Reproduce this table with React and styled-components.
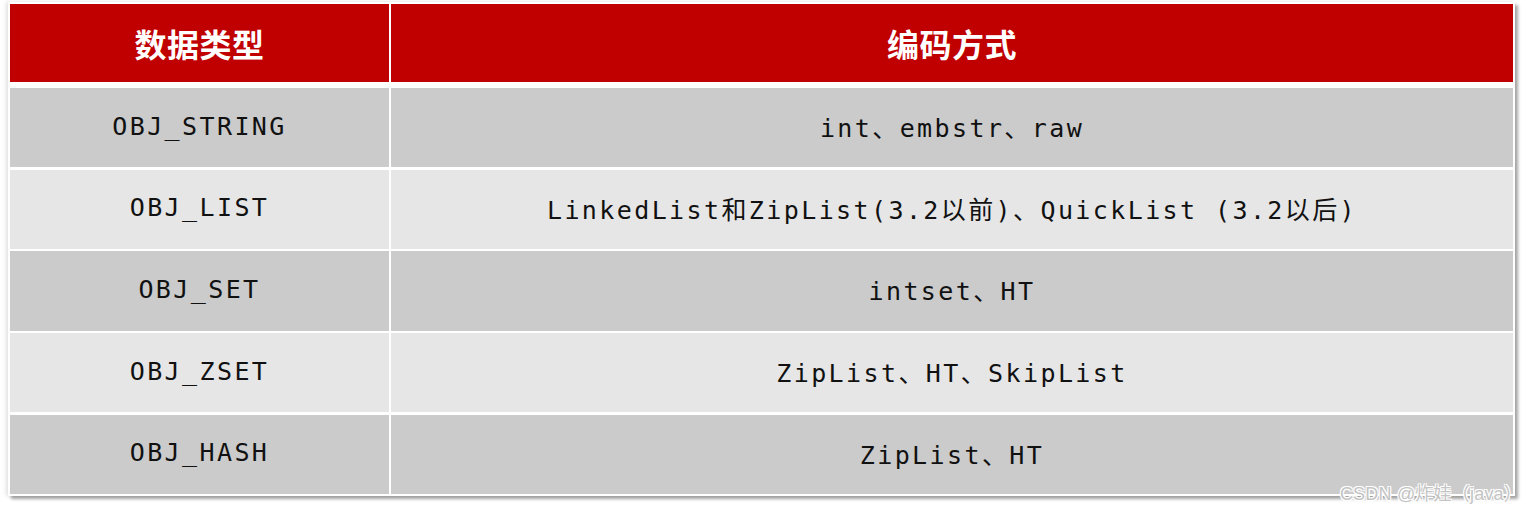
import styled, { createGlobalStyle } from 'styled-components'

const Global = createGlobalStyle`
	body{
		margin:0;
		background:#ffffff;
	}
`

const Page = styled.div`
	position:relative;
	width:1527px;
	height:512px;
	padding:2px 0 0 8px;
	box-sizing:border-box;
`

const Table = styled.div`
	width:1507px;
	padding:2px;
	box-sizing:border-box;
	background:#ffffff;
	display:grid;
	grid-template-columns:379px 1fr;
	grid-template-rows:81.5px repeat(5,79.2px);
	column-gap:2px;
	row-gap:2.5px;
	box-shadow:3px 3px 3px rgba(0,0,0,0.35), -2px 0 4px rgba(0,0,0,0.12);
`

const HeadCell = styled.div`
	background:#c00000;
	color:#ffffff;
	margin-bottom:3.5px;
	display:flex;
	align-items:center;
	justify-content:center;
	font-family:"Noto Sans CJK SC","Noto Sans",sans-serif;
	font-weight:700;
	font-size:32px;
	letter-spacing:0.5px;
`

const Cell = styled.div`
	background:${p => p.$dark ? '#cbcbcb' : '#e6e6e6'};
	color:#111111;
	padding-bottom:3px;
	display:flex;
	align-items:center;
	justify-content:center;
	font-family:"DejaVu Sans Mono","Noto Sans CJK SC",monospace;
	font-size:25px;
	letter-spacing:2.4px;
	white-space:nowrap;
`

const Watermark = styled.div`
	position:absolute;
	right:5px;
	top:479px;
	font-family:"Liberation Sans","Noto Sans CJK SC",sans-serif;
	font-size:18px;
	letter-spacing:0.2px;
	color:#c4c4c4;
	text-shadow:1px 1px 0 #ffffff,-1px -1px 0 #ffffff,1px -1px 0 #ffffff,-1px 1px 0 #ffffff;
	white-space:nowrap;
`

const rows = [
	['OBJ_STRING','int、embstr、raw'],
	['OBJ_LIST','LinkedList和ZipList(3.2以前)、QuickList (3.2以后)'],
	['OBJ_SET','intset、HT'],
	['OBJ_ZSET','ZipList、HT、SkipList'],
	['OBJ_HASH','ZipList、HT'],
]

export default function App() {
	return(
	<Page>
		<Global/>
		<Table>
			<HeadCell>数据类型</HeadCell>
			<HeadCell>编码方式</HeadCell>
			{rows.map((row,index)=>(
				[
					<Cell key={'a'+index} $dark={index%2===0}>{row[0]}</Cell>,
					<Cell key={'b'+index} $dark={index%2===0}>{row[1]}</Cell>
				]
			))}
		</Table>
		<Watermark>CSDN @炸娃（java）</Watermark>
	</Page>
	)
}
